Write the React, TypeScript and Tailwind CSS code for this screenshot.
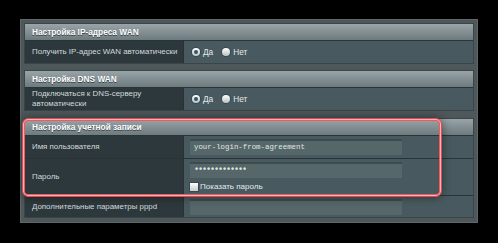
import React from "react";

function Radio({ checked }: { checked?: boolean }) {
  return (
    <span className="inline-flex h-[8px] w-[8px] items-center justify-center rounded-full bg-gradient-to-b from-[#ffffff] to-[#b9c2c5] shadow-[0_0_0_1px_#3c474b]">
      {checked && <span className="h-[4px] w-[4px] rounded-full bg-[#35556a]" />}
    </span>
  );
}

function Header({ title }: { title: string }) {
  return (
    <div className="flex h-[16px] items-center bg-gradient-to-b from-[#98a4a8] to-[#6d7a7e] pl-[7px] text-[8.3px] font-bold text-white [text-shadow:0_1px_0_#3a4447]">
      {title}
    </div>
  );
}

function Row({ label, children, h }: { label: React.ReactNode; children?: React.ReactNode; h: string }) {
  return (
    <div className={"flex border-t border-[#2a3336] " + h}>
      <div className="flex w-[159px] items-center border-r border-[#283135] bg-[#2d383c] pl-[7px] text-[7.9px] leading-[10px] text-[#d3d9db]">
        {label}
      </div>
      <div className="flex flex-1 flex-col justify-center bg-[#485a5f] pl-[6px]">{children}</div>
    </div>
  );
}

function Input({ value, dots }: { value?: string; dots?: boolean }) {
  return (
    <div
      className={
        "flex h-[16px] w-[212px] items-center border-t-2 border-[#3d4a4e] bg-[#566769] pl-[4px] font-['Liberation_Mono',monospace] text-[#e1e6e8] " +
        (dots ? "text-[8.5px] font-bold tracking-[-1.1px]" : "text-[7.4px]")
      }
    >
      {value}
    </div>
  );
}

function YesNo() {
  return (
    <div className="flex items-center gap-[3px] pl-[2px] text-[8.3px] text-[#e4e8ea]">
      <Radio checked />
      <span className="mr-[6px]">Да</span>
      <Radio />
      <span>Нет</span>
    </div>
  );
}

export default function App() {
  return (
    <div className="h-[243px] w-[498px] bg-black pl-[20px] pt-[19px] font-['Liberation_Sans',Arial,sans-serif]">
      <div className="relative h-[204px] w-[458px] bg-[#4e575a] px-[4px] pb-[5px] pt-[4px] shadow-[inset_0_0_0_1px_#5d676a]">
        <div className="flex flex-col">
          <div className="border border-[#3b4548]">
            <Header title="Настройка IP-адреса WAN" />
            <Row h="h-[23px]" label="Получить IP-адрес WAN автоматически">
              <YesNo />
            </Row>
          </div>
          <div className="mt-[6px] border border-[#3b4548]">
            <Header title="Настройка DNS WAN" />
            <Row
              h="h-[23px]"
              label={
                <span>
                  Подключаться к DNS-серверу
                  <br />
                  автоматически
                </span>
              }
            >
              <YesNo />
            </Row>
          </div>
          <div className="mt-[7px] border border-[#3b4548]">
            <Header title="Настройка учетной записи" />
            <Row h="h-[23px]" label="Имя пользователя">
              <Input value="your-login-from-agreement" />
            </Row>
            <Row h="h-[37px]" label="Пароль">
              <Input value="•••••••••••••" dots />
              <div className="mt-[3px] flex items-center gap-[2px] text-[8px] text-[#e4e8ea]">
                <span className="h-[8px] w-[8px] bg-gradient-to-b from-[#ffffff] to-[#c3cbce] shadow-[0_0_0_1px_#3c474b]" />
                <span>Показать пароль</span>
              </div>
            </Row>
            <Row h="h-[22px]" label="Дополнительные параметры pppd">
              <Input />
            </Row>
          </div>
        </div>
        <div className="pointer-events-none absolute left-[2px] top-[99px] h-[79px] w-[420px] rounded-[6px] border border-[#e3484f] shadow-[inset_0_0_0_1px_#ffb4b6,inset_0_0_0_2px_#ee5a60,0_0_10px_rgba(0,0,0,0.45)]" />
      </div>
    </div>
  );
}
